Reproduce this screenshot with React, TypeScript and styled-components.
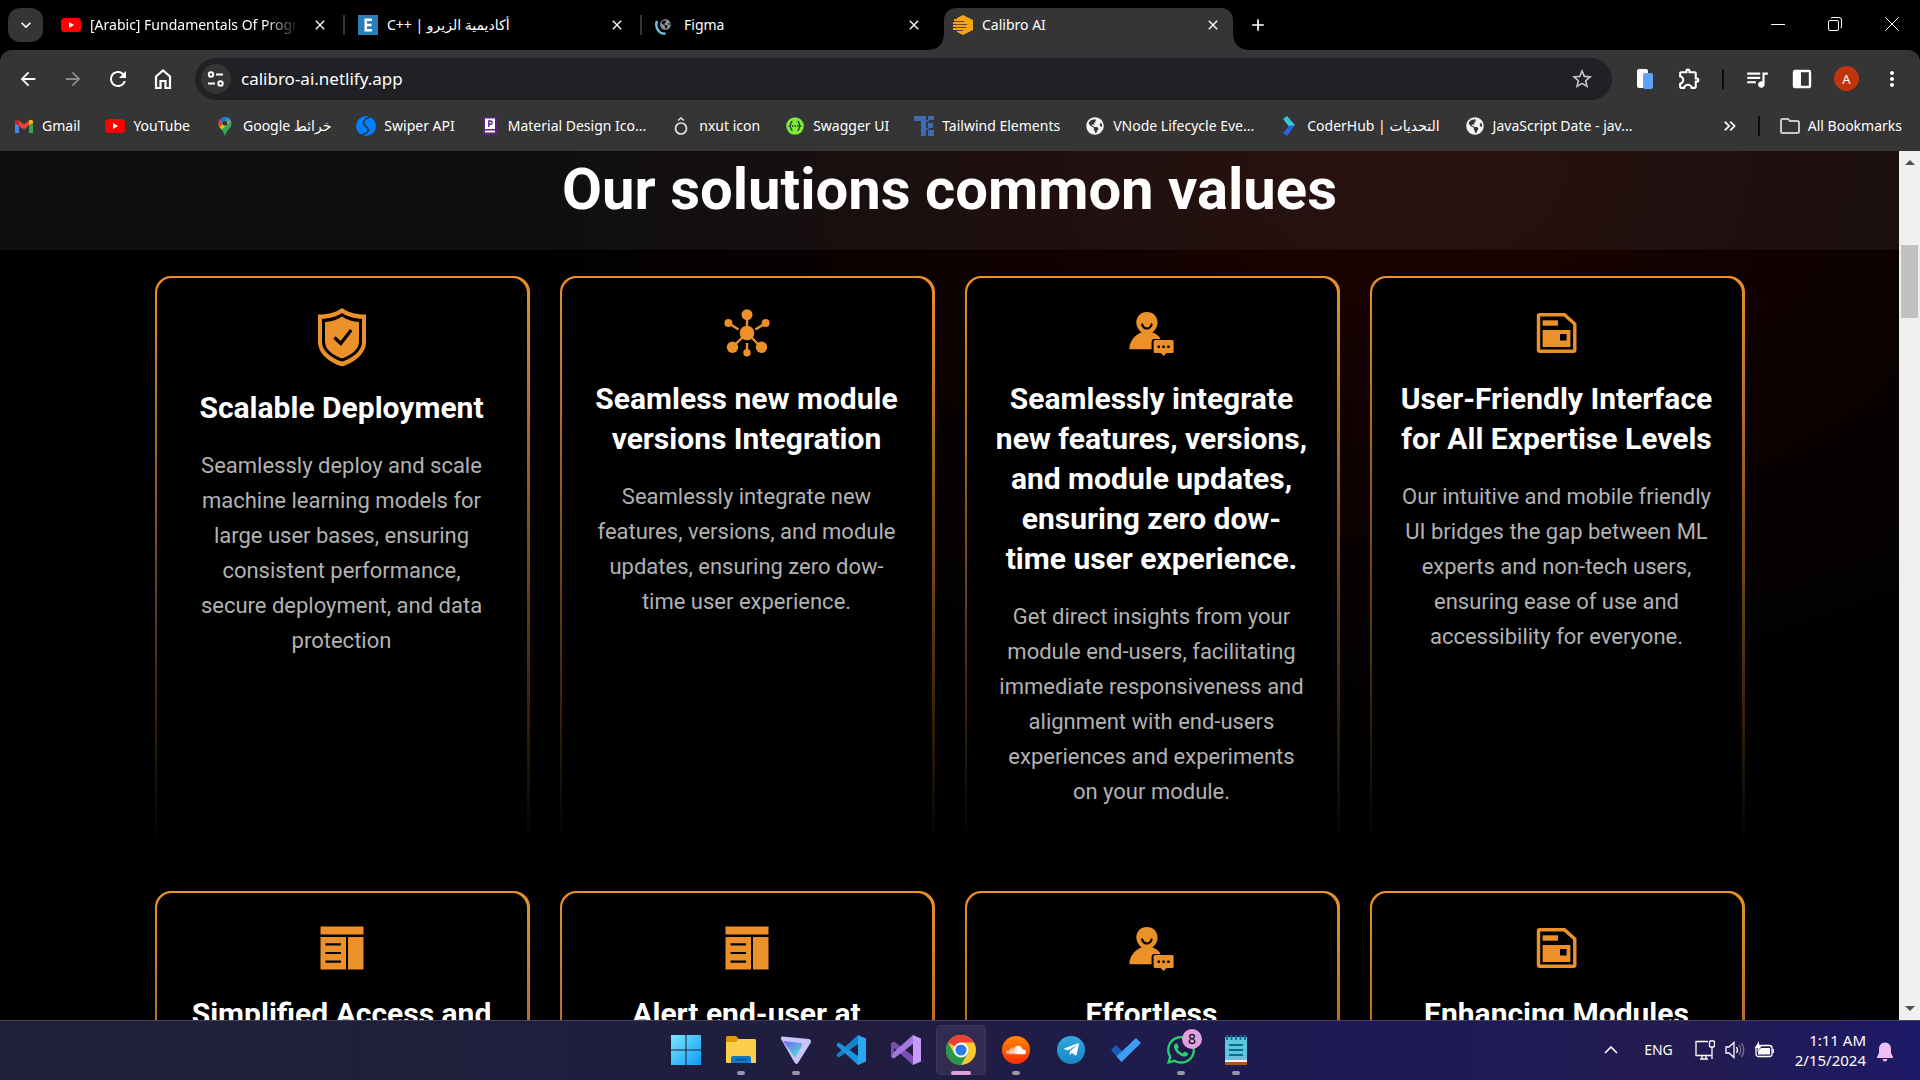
import React from "react";
import styled, { createGlobalStyle, css } from "styled-components";
import {
  MdArrowBack,
  MdArrowForward,
  MdClose,
  MdKeyboardArrowDown,
  MdMoreVert,
  MdOutlineExtension,
  MdQueueMusic,
  MdRefresh,
  MdStarBorder,
  MdAdd,
  MdKeyboardDoubleArrowRight,
} from "react-icons/md";
import { FaGlobeAmericas, FaSoundcloud, FaTelegramPlane, FaWhatsapp } from "react-icons/fa";

const UI_FONT = '"Noto Sans", "Open Sans", "DejaVu Sans", sans-serif';
const PAGE_FONT = 'Roboto, "Liberation Sans", sans-serif';
const ORANGE = "#ec9129";

const GlobalStyle = createGlobalStyle`
  *, *::before, *::after { box-sizing: border-box; }
  html, body { margin: 0; padding: 0; background: #000; }
  button, input { font: inherit; color: inherit; border: 0; background: none; padding: 0; margin: 0; outline: 0; }
  a { color: inherit; text-decoration: none; }
  h1, h2, p, ul { margin: 0; padding: 0; }
  svg { display: block; flex: none; }
`;

const Desktop = styled.div`
  display: flex;
  flex-direction: column;
  height: 100vh;
  overflow: hidden;
  background: #000;
  color: #fff;
  font-family: ${UI_FONT};
`;

/* ---------- Tab strip ---------- */

const TabStrip = styled.header`
  display: flex;
  flex: none;
  height: 50px;
  padding-left: 8px;
  background: #000;
`;

const TabSearch = styled.button`
  display: grid;
  place-items: center;
  width: 35px;
  height: 34px;
  margin: 8px 4px 0 0;
  border-radius: 12px;
  background: #353535;
`;

const Tab = styled.div<{ $active?: boolean; $divider?: boolean }>`
  position: relative;
  display: flex;
  align-items: center;
  flex: 0 1 297px;
  min-width: 0;
  gap: 9px;
  padding: 0 16px 8px 14px;
  margin-top: 8px;
  font-size: 14px;
  line-height: 20px;
  ${(p) =>
    p.$divider &&
    css`
      &::after {
        content: "";
        position: absolute;
        right: -1px;
        top: 7px;
        width: 2px;
        height: 20px;
        background: #353535;
      }
    `}
  ${(p) =>
    p.$active &&
    css`
      flex-basis: 289px;
      margin-left: 6px;
      padding: 0 12px 8px 9px;
      border-radius: 12px 12px 0 0;
      background: #353535;
      &::before,
      &::after {
        content: "";
        position: absolute;
        bottom: 0;
        width: 14px;
        height: 14px;
      }
      &::before {
        left: -14px;
        background: radial-gradient(circle at 0 0, transparent 13px, #353535 14px);
      }
      &::after {
        right: -14px;
        background: radial-gradient(circle at 100% 0, transparent 13px, #353535 14px);
      }
    `}
`;

const TabTitle = styled.button<{ $fade?: boolean }>`
  flex: 1;
  min-width: 0;
  overflow: hidden;
  white-space: nowrap;
  text-align: left;
  ${(p) =>
    p.$fade &&
    css`
      mask-image: linear-gradient(90deg, #000 82%, transparent 98%);
    `}
`;

const IconButton = styled.button<{ $size?: number }>`
  display: grid;
  place-items: center;
  flex: none;
  width: ${(p) => p.$size ?? 16}px;
  height: ${(p) => p.$size ?? 16}px;
`;

const NewTab = styled(IconButton)`
  margin: 8px 0 0 8px;
`;

const WindowControls = styled.div`
  display: flex;
  margin-left: auto;
`;

const WindowButton = styled.button`
  display: grid;
  place-items: center;
  width: 57px;
  height: 48px;
`;

/* ---------- Toolbar ---------- */

const Toolbar = styled.nav`
  display: flex;
  align-items: center;
  flex: none;
  height: 57px;
  padding: 0 6px 0 5px;
  border-radius: 12px 12px 0 0;
  background: #353535;
`;

const ToolButton = styled.button<{ $dim?: boolean }>`
  display: grid;
  place-items: center;
  flex: none;
  width: 45px;
  height: 40px;
  color: ${(p) => (p.$dim ? "#8a8a8a" : "#fff")};
`;

const Omnibox = styled.div`
  display: flex;
  align-items: center;
  flex: 1;
  gap: 10px;
  height: 42px;
  margin: 0 10px;
  padding: 0 18px 0 6px;
  border-radius: 21px;
  background: #202124;
`;

const SiteChip = styled.button`
  display: grid;
  place-items: center;
  width: 30px;
  height: 30px;
  border-radius: 50%;
  background: #353535;
`;

const Address = styled.input`
  flex: 1;
  min-width: 0;
  font-size: 17px;
  line-height: 24px;
`;

const Divider = styled.span<{ $wide?: boolean }>`
  flex: none;
  width: 2px;
  height: 20px;
  background: #0c0c0c;
  margin: ${(p) => (p.$wide ? "0 20px 0 18px" : "0 10px")};
`;

const Avatar = styled.span`
  display: grid;
  place-items: center;
  width: 25px;
  height: 25px;
  border-radius: 50%;
  background: #bf360c;
  font-size: 13px;
`;

/* ---------- Bookmarks ---------- */

const BookmarkBar = styled.nav`
  display: flex;
  align-items: center;
  flex: none;
  gap: 25px;
  height: 44px;
  padding: 0 18px 6px 14px;
  background: #353535;
  font-size: 14px;
  line-height: 20px;
  white-space: nowrap;
`;

const Bookmark = styled.a`
  display: flex;
  align-items: center;
  gap: 8px;
  svg {
    width: 20px;
  }
`;

const BookmarkEnd = styled.div`
  display: flex;
  align-items: center;
  margin-left: auto;
`;

/* ---------- Web page ---------- */

const Viewport = styled.div`
  display: flex;
  flex: 1;
  min-height: 0;
`;

const Page = styled.main`
  flex: 1;
  min-width: 0;
  overflow: hidden;
  font-family: ${PAGE_FONT};
  background: radial-gradient(ellipse 48% 560px at 74% 20px, #1c0402 0%, #130201 35%, #080101 70%, #000 100%) #000;
`;

const Band = styled.div`
  height: 99px;
  background: rgba(255, 255, 255, 0.06);
  text-align: center;
`;

const Heading = styled.h1`
  padding-top: 2px;
  font-size: 58px;
  line-height: 72px;
  font-weight: 700;
`;

const CardGrid = styled.section`
  display: grid;
  grid-template-columns: repeat(4, minmax(0, 375px));
  justify-content: center;
  gap: 45px 30px;
  padding-top: 26px;
`;

const Card = styled.article`
  display: flex;
  min-height: 570px;
  padding: 2px 3px 0 2px;
  border-radius: 16px 16px 0 0;
  background: linear-gradient(${ORANGE}, #000);
`;

const CardBody = styled.div`
  display: flex;
  flex: 1;
  flex-direction: column;
  align-items: center;
  gap: 20px;
  padding: 30px 24px 37px;
  border-radius: 15px 15px 0 0;
  background: #000;
  text-align: center;
  white-space: pre-line;
`;

const CardTitle = styled.h2`
  padding-top: 1px;
  font-size: 30px;
  line-height: 40px;
  font-weight: 700;
`;

const CardText = styled.p`
  font-size: 22px;
  line-height: 35px;
  color: #b2b2b2;
`;

const Scrollbar = styled.div`
  display: flex;
  flex-direction: column;
  width: 21px;
  background: #f0f0f0;
`;

const ScrollArrow = styled.button`
  display: grid;
  place-items: center;
  height: 23px;
`;

const ScrollTrack = styled.div`
  flex: 1;
  padding: 71px 2px 0;
`;

const ScrollThumb = styled.div`
  height: 73px;
  background: #c1c1c1;
`;

/* ---------- Taskbar ---------- */

const Taskbar = styled.footer`
  display: grid;
  grid-template-columns: 1fr auto 1fr;
  align-items: center;
  flex: none;
  height: 60px;
  padding: 0 0 2px 2px;
  border-top: 1px solid #444060;
  background: linear-gradient(90deg, #1f2138 0%, #201d40 45%, #1f1958 75%, #231c50 88%, #1e1968 100%);
`;

const Apps = styled.div`
  display: flex;
  grid-column: 2;
  gap: 5px;
`;

const AppButton = styled.button<{ $active?: boolean }>`
  position: relative;
  display: grid;
  place-items: center;
  width: 50px;
  height: 50px;
  border-radius: 5px;
  ${(p) =>
    p.$active &&
    css`
      background: #322c50;
      box-shadow: inset 0 0 0 1px #3c3658;
    `}
`;

const Running = styled.span<{ $active?: boolean }>`
  position: absolute;
  bottom: 0;
  left: 50%;
  transform: translateX(-50%);
  width: ${(p) => (p.$active ? 20 : 8)}px;
  height: 4px;
  border-radius: 2px;
  background: ${(p) => (p.$active ? "#dfa0e0" : "#9896a8")};
`;

const Badge = styled.span`
  position: absolute;
  top: 4px;
  right: 4px;
  width: 20px;
  height: 20px;
  border-radius: 50%;
  background: #dfa0e0;
  color: #000;
  font-size: 14px;
  line-height: 20px;
`;

const Tray = styled.div`
  display: flex;
  align-items: center;
  justify-content: flex-end;
  padding-right: 27px;
  font-size: 14px;
  line-height: 20px;
`;

const TrayGroup = styled.button`
  display: flex;
  align-items: center;
  gap: 10px;
  margin: 0 20px 0 22px;
`;

const Language = styled.button`
  margin-left: 25px;
`;

const Clock = styled.button`
  display: flex;
  flex-direction: column;
  align-items: flex-end;
  margin-right: 11px;
  font-size: 15px;
`;

/* ---------- Card icons ---------- */

const ShieldIcon = () => (
  <svg width="48" height="59" viewBox="0 0 48 59" fill={ORANGE}>
    <path d="M24 0C17 5 9 6.500 0 6.500V34C0 46 12 54 21 57.500Q24 59 27 57.500C36 54 48 46 48 34V6.500C39 6.500 31 5 24 0Z" />
    <path fill="#000" d="M24 5C18 9 11 10.500 4 10.800V34C4 43 13 49.500 22 53Q24 53.800 26 53C35 49.500 44 43 44 34V10.800C37 10.500 30 9 24 5Z" />
    <path d="M24 8.500C19 12 13 13.500 7 14V34C7 41 14 46.500 22.500 50Q24 50.700 25.500 50C34 46.500 41 41 41 34V14C35 13.500 29 12 24 8.500Z" />
    <path d="M16.500 29.500 22.800 35.500 33.200 22" fill="none" stroke="#000" strokeWidth="3.200" />
  </svg>
);

const NetworkIcon = () => (
  <svg width="50" height="50" viewBox="0 0 50 50" fill={ORANGE}>
    <path d="M25 7V25M8 16 16.500 21.500M42 16 33.500 21.500M25 25 10.500 39M25 25 39 39M25 35V44" stroke={ORANGE} strokeWidth="2.400" />
    <circle cx="25" cy="25" r="7.300" />
    <circle cx="25" cy="6.700" r="5.500" />
    <circle cx="6.400" cy="15" r="4" />
    <circle cx="43.600" cy="15" r="4" />
    <circle cx="10.500" cy="39.300" r="5.700" />
    <circle cx="39.500" cy="39.300" r="5.700" />
    <circle cx="25" cy="44.700" r="3.700" />
  </svg>
);

const PersonIcon = () => (
  <svg width="50" height="50" viewBox="0 0 50 50" fill={ORANGE}>
    <g transform="translate(0.600 0)">
      <path d="M19.300 4C12.800 4 8.700 8.800 8.700 14.500 8.700 18.500 11 22 14 24.500 7 27 2 33 1.700 41.300H24V34C24 32 25 31 27 31H33C31.500 28 28.500 25.500 24.700 24.500 28 22 30 18.500 30 14.500 30 8.800 25.800 4 19.300 4Z" />
      <path d="M14.500 16.500Q16 20.500 19.300 20.500T24 16.500" fill="none" stroke="#000" strokeWidth="2.200" strokeLinecap="round" />
      <path d="M27.500 32H44.500Q46 32 46 33.500V43.500Q46 45 44.500 45H39L36 48 33 45H27.500Q26 45 26 43.500V33.500Q26 32 27.500 32Z" />
      <path d="M30 37.500h2.400v2.400h-2.400zM34.800 37.500h2.400v2.400h-2.400zM39.600 37.500h2.400v2.400h-2.400z" fill="#000" />
    </g>
  </svg>
);

const SaveIcon = () => (
  <svg width="50" height="50" viewBox="0 0 50 50" fill={ORANGE}>
    <path d="M7.500 6.700H32.500L42.800 16V41.800Q42.800 43.300 41.300 43.300H8Q6.500 43.300 6.500 41.800V7.700Q6.500 6.700 7.500 6.700Z" fill="none" stroke={ORANGE} strokeWidth="3.400" />
    <path d="M10.600 12.300H26v5.400H10.600z" />
    <path fillRule="evenodd" d="M10.600 22H38.400V39H10.600zM28 26v6.600h6.600V26z" />
  </svg>
);

const LayoutIcon = () => (
  <svg width="50" height="50" viewBox="0 0 50 50" fill={ORANGE}>
    <path d="M3.500 3.500H46.500V11.500H3.500zM31 14H46.500V46.500H31zM3.500 14H29V46.500H3.500z" />
    <path d="M8.500 21.300H24M8.500 30H24M8.500 38.700H24" stroke="#000" strokeWidth="2.200" />
  </svg>
);

/* ---------- Browser icons ---------- */

const YouTubeIcon = () => (
  <svg width="20" height="14" viewBox="0 0 20 14">
    <rect width="20" height="14" rx="3.500" fill="#f00" />
    <path d="M8 4v6l5-3z" fill="#fff" />
  </svg>
);

const EIcon = () => (
  <svg width="20" height="20" viewBox="0 0 20 20">
    <rect width="20" height="20" fill="#2980b9" />
    <path d="M6.500 3.500H14V6H9V8.800H13.500V11.200H9V14H14V16.500H6.500z" fill="#fff" />
  </svg>
);

const LoadingIcon = () => (
  <svg width="20" height="20" viewBox="0 0 20 20">
    <g transform="translate(5 4)" color="#8e9399">
      <FaGlobeAmericas size={11} />
    </g>
    <path d="M2 6A8 9 0 0 0 10.500 18.500" fill="none" stroke="#6ec6de" strokeWidth="2.400" />
  </svg>
);

const CalibroIcon = () => (
  <svg width="20" height="20" viewBox="0 0 20 20">
    <path d="M10 0 20 5V15L10 20 4 17V3z" fill="#f5a40c" />
    <path d="M1 5H9M0 8H12M0 11H13M0 14H10" stroke="#f5a40c" strokeWidth="1.800" />
    <path d="M2 6.500H11M1 9.500H14M2 12.500H13M4 15.500H10" stroke="#6d4a12" strokeWidth="1" />
  </svg>
);

const GmailIcon = () => (
  <svg width="20" height="16" viewBox="0 0 20 16">
    <path d="M1 4V14Q1 15 2 15H5V7z" fill="#4285f4" />
    <path d="M19 4V14Q19 15 18 15H15V7z" fill="#34a853" />
    <path d="M15 7V2.500C16.500 1 19 1.500 19 4V5z" fill="#fbbc04" />
    <path d="M1 5V4C1 1.500 3.500 1 5 2.500L10 6.500 15 2.500V7.500L10 11.500 5 8z" fill="#ea4335" />
    <path d="M1 4C1 1.500 3.500 1 5 2.500V8L1 5z" fill="#c5221f" />
  </svg>
);

const MapsIcon = () => (
  <svg width="20" height="20" viewBox="0 0 20 20">
    <path d="M3.500 7.500A6.500 6.500 0 0 1 16.500 7.500C16.500 12 11.500 14 10 20 8.500 14 3.500 12 3.500 7.500Z" fill="#34a853" />
    <path d="M5 3.200A6.500 6.500 0 0 1 12.500 1.200L6 9z" fill="#1a73e8" />
    <path d="M12.500 1.200A6.500 6.500 0 0 1 16 5L11 10z" fill="#4285f4" />
    <path d="M5 3.200C3 6 3.200 8.500 4.500 11L8 7z" fill="#ea4335" />
    <path d="M4.500 11 6.500 13.500 16 5 12 6z" fill="#fbbc04" />
    <circle cx="10" cy="7.300" r="2.400" fill="#353535" />
  </svg>
);

const SwiperIcon = () => (
  <svg width="20" height="20" viewBox="0 0 20 20">
    <circle cx="10" cy="10" r="10" fill="#0080ff" />
    <path d="M14.500 1C7 3 6 7 10 10.500S13 17 5.500 19" fill="none" stroke="#353535" strokeWidth="1.600" />
  </svg>
);

const MaterialIcon = () => (
  <svg width="20" height="20" viewBox="0 0 20 20">
    <path d="M3 1H17V19H3z" fill="#5b2374" />
    <path d="M5 2.500H15V13H5zM5 14.500H15V16.500H5z" fill="#fff" />
    <path d="M8.800 11V5H10.500A1.600 1.600 0 0 1 10.500 8.300H9" fill="none" stroke="#5b2374" strokeWidth="1.400" />
  </svg>
);

const NxutIcon = () => (
  <svg width="20" height="20" viewBox="0 0 20 20" fill="none" stroke="#e6e6e6">
    <circle cx="10" cy="12.500" r="5.500" strokeWidth="1.700" />
    <path d="M7 4.500 10 2 13 4.500" strokeWidth="1.400" />
  </svg>
);

const SwaggerIcon = () => (
  <svg width="20" height="20" viewBox="0 0 20 20">
    <circle cx="10" cy="10" r="9.500" fill="#173647" />
    <circle cx="10" cy="10" r="8.800" fill="#85ea2d" />
    <path d="M7.500 5.500C5 5.500 7 9 4.500 10 7 11 5 14.500 7.500 14.500M12.500 5.500C15 5.500 13 9 15.500 10 13 11 15 14.500 12.500 14.500" fill="none" stroke="#173647" strokeWidth="1.300" />
    <path d="M7 10H13.500" stroke="#173647" strokeWidth="1.500" strokeDasharray="1.500 1" />
  </svg>
);

const TailwindElementsIcon = () => (
  <svg width="20" height="20" viewBox="0 0 20 20" fill="#3f6bb5">
    <path d="M0 0H12V5H0zM7 5H12V20H7zM14 0H20V4H14zM14 7H19V12H14zM14 14H20V20H14z" />
    <path d="M12 5H15M12 13H15" stroke="#3f6bb5" strokeWidth="1.500" />
  </svg>
);

const GlobeIcon = () => <FaGlobeAmericas size={18} color="#f4f4f4" />;

const CoderHubIcon = () => (
  <svg width="20" height="20" viewBox="0 0 20 20">
    <path d="M4 3 8 0 16 9 12 13z" fill="#35c8dc" />
    <path d="M16 9 8 20 4 17 10 10z" fill="#2b62e8" />
  </svg>
);

const FolderIcon = () => (
  <svg width="20" height="16" viewBox="0 0 20 16" fill="none" stroke="#c7c7c7" strokeWidth="2">
    <path d="M1 2.500Q1 1 2.500 1H8L10 3H17.500Q19 3 19 4.500V13.500Q19 15 17.500 15H2.500Q1 15 1 13.500z" />
  </svg>
);

const HomeIcon = () => (
  <svg width="20" height="22" viewBox="0 0 20 22" fill="none" stroke="#fff" strokeWidth="2.200">
    <path d="M3 8.500 10 2.500 17 8.500V20H12.500V13H7.500V20H3z" />
  </svg>
);

const TuneIcon = () => (
  <svg width="18" height="16" viewBox="0 0 18 16" fill="none" stroke="#fff" strokeWidth="2">
    <circle cx="4" cy="3.500" r="2.200" />
    <path d="M9 3.500H16M1 12.500H8" />
    <circle cx="13.500" cy="12.500" r="2.200" />
  </svg>
);

const DevicesIcon = () => (
  <svg width="18" height="20" viewBox="0 0 18 20">
    <rect x="1" y="0" width="11" height="19" rx="2" fill="#fff" />
    <rect x="7" y="4" width="10" height="16" rx="2" fill="#5ea3fb" />
  </svg>
);

const SidePanelIcon = () => (
  <svg width="20" height="20" viewBox="0 0 20 20">
    <rect x="2" y="2" width="16" height="16" rx="1" fill="none" stroke="#fff" strokeWidth="2.400" />
    <path d="M2 2H9V18H2z" fill="#fff" />
  </svg>
);

/* ---------- Taskbar icons ---------- */

const WindowsIcon = () => (
  <svg width="30" height="30" viewBox="0 0 30 30">
    <defs>
      <linearGradient id="win" x1="0" y1="0" x2="1" y2="1">
        <stop offset="0" stopColor="#7be6fc" />
        <stop offset="1" stopColor="#0f9bf6" />
      </linearGradient>
    </defs>
    <path d="M0 0H14.500V14.500H0zM15.500 0H30V14.500H15.500zM0 15.500H14.500V30H0zM15.500 15.500H30V30H15.500z" fill="url(#win)" />
  </svg>
);

const ExplorerIcon = () => (
  <svg width="30" height="28" viewBox="0 0 30 28">
    <path d="M0 1.500Q0 0 1.500 0H10L13 3V9H0z" fill="#dd9a05" />
    <path d="M0 6H10L13 3H28.500Q30 3 30 4.500V27H1.500Q0 27 0 25.500z" fill="#fccf4b" />
    <path d="M5 27V22Q5 20 7 20H23Q25 20 25 22V27z" fill="#0f7bcb" />
    <path d="M9 23.500H21" stroke="#0a4b86" strokeWidth="1.600" />
  </svg>
);

const ProtonIcon = () => (
  <svg width="30" height="30" viewBox="0 0 30 30">
    <defs>
      <linearGradient id="proton" x1="0" y1="0" x2="0.700" y2="1">
        <stop offset="0" stopColor="#7a5cff" />
        <stop offset="1" stopColor="#4fe3c8" />
      </linearGradient>
    </defs>
    <path d="M1 1.500 28 4Q31 5 29.500 8L17 28Q15 30 13.500 27.500L0 4Q0 1 1 1.500Z" fill="#c9c3fb" />
    <path d="M2 6 20 8Q22 9 21 11L14 23z" fill="url(#proton)" />
  </svg>
);

const VSCodeIcon = () => (
  <svg width="30" height="30" viewBox="0 0 30 30">
    <path d="M22 0 1 19Q0 20 1 21L3 22.500 22 9z" fill="#1583c8" />
    <path d="M22 30 1 11Q0 10 1 9L3 7.500 22 21z" fill="#1b93dd" />
    <path d="M22 0 30 3.500V26.500L22 30z" fill="#29a8f2" />
  </svg>
);

const VisualStudioIcon = () => (
  <svg width="30" height="30" viewBox="0 0 30 30">
    <path d="M0 8 3 6.500 22 21V30L3 13V19L0 22z" fill="#7a4fb5" />
    <path d="M0 22 3 23.500 22 9V0L3 17z" fill="#a576dc" />
    <path d="M22 0 30 3.500V26.500L22 30z" fill="#c79bf7" />
  </svg>
);

const ChromeIcon = () => (
  <svg width="30" height="30" viewBox="0 0 30 30">
    <circle cx="15" cy="15" r="15" fill="#fcc934" />
    <path d="M15 15 2 7.500A15 15 0 0 1 28 7.500H15z" fill="#e94235" />
    <path d="M2 7.500A15 15 0 0 0 15 30L21.500 18.700 15 15 8.500 18.800z" fill="#279847" />
    <circle cx="15" cy="15" r="7.400" fill="#fff" />
    <circle cx="15" cy="15" r="5.600" fill="#2b7be9" />
  </svg>
);

const Disc = styled.span<{ $fill: string }>`
  display: grid;
  place-items: center;
  width: 28px;
  height: 28px;
  border-radius: 50%;
  background: ${(p) => p.$fill};
  color: #fff;
`;

const TodoIcon = () => (
  <svg width="30" height="26" viewBox="0 0 30 26">
    <path d="M0 13 5 8 16 19 10.500 25z" fill="#195abd" />
    <path d="M10.500 25 5.500 19.500 25 1 30 6z" fill="#3f9cf3" />
  </svg>
);

const NotepadIcon = () => (
  <svg width="24" height="30" viewBox="0 0 24 30">
    <path d="M1 26H23V30H1z" fill="#a35a1c" />
    <path d="M1 2H23V26H1z" fill="#5cc6dc" />
    <path d="M1 25H23V27H1z" fill="#f3f3f3" />
    <path d="M3 0V5M7.500 0V5M12 0V5M16.500 0V5M21 0V5M5 10H19M5 15H19M5 20H19" stroke="#0d6a8c" strokeWidth="1.800" />
  </svg>
);

/* ---------- Data ---------- */

const bookmarks: { label: string; href: string; icon: React.ReactNode }[] = [
  { label: "Gmail", href: "#gmail", icon: <GmailIcon /> },
  { label: "YouTube", href: "#youtube", icon: <YouTubeIcon /> },
  { label: "Google خرائط", href: "#maps", icon: <MapsIcon /> },
  { label: "Swiper API", href: "#swiper", icon: <SwiperIcon /> },
  { label: "Material Design Ico...", href: "#material", icon: <MaterialIcon /> },
  { label: "nxut icon", href: "#nxut", icon: <NxutIcon /> },
  { label: "Swagger UI", href: "#swagger", icon: <SwaggerIcon /> },
  { label: "Tailwind Elements", href: "#tailwind", icon: <TailwindElementsIcon /> },
  { label: "VNode Lifecycle Eve...", href: "#vnode", icon: <GlobeIcon /> },
  { label: "CoderHub | التحديات", href: "#coderhub", icon: <CoderHubIcon /> },
  { label: "JavaScript Date - jav...", href: "#jsdate", icon: <GlobeIcon /> },
];

const cards: { icon: React.ReactNode; title: string; text?: string }[] = [
  {
    icon: <ShieldIcon />,
    title: "Scalable Deployment",
    text: "Seamlessly deploy and scale\nmachine learning models for\nlarge user bases, ensuring\nconsistent performance,\nsecure deployment, and data\nprotection",
  },
  {
    icon: <NetworkIcon />,
    title: "Seamless new module\nversions Integration",
    text: "Seamlessly integrate new\nfeatures, versions, and module\nupdates, ensuring zero dow-\ntime user experience.",
  },
  {
    icon: <PersonIcon />,
    title: "Seamlessly integrate\nnew features, versions,\nand module updates,\nensuring zero dow-\ntime user experience.",
    text: "Get direct insights from your\nmodule end-users, facilitating\nimmediate responsiveness and\nalignment with end-users\nexperiences and experiments\non your module.",
  },
  {
    icon: <SaveIcon />,
    title: "User-Friendly Interface\nfor All Expertise Levels",
    text: "Our intuitive and mobile friendly\nUI bridges the gap between ML\nexperts and non-tech users,\nensuring ease of use and\naccessibility for everyone.",
  },
  { icon: <LayoutIcon />, title: "Simplified Access and" },
  { icon: <LayoutIcon />, title: "Alert end-user at" },
  { icon: <PersonIcon />, title: "Effortless" },
  { icon: <SaveIcon />, title: "Enhancing Modules" },
];

const apps: { name: string; icon: React.ReactNode; running?: boolean; active?: boolean; badge?: string }[] = [
  { name: "Start", icon: <WindowsIcon /> },
  { name: "File Explorer", icon: <ExplorerIcon />, running: true },
  { name: "Proton VPN", icon: <ProtonIcon />, running: true },
  { name: "Visual Studio Code", icon: <VSCodeIcon /> },
  { name: "Visual Studio", icon: <VisualStudioIcon /> },
  { name: "Google Chrome", icon: <ChromeIcon />, running: true, active: true },
  {
    name: "SoundCloud",
    icon: (
      <Disc $fill="linear-gradient(#ff8a00, #ff2a00)">
        <FaSoundcloud size={20} />
      </Disc>
    ),
    running: true,
  },
  {
    name: "Telegram",
    icon: (
      <Disc $fill="linear-gradient(#2fa9e0, #1586c2)">
        <FaTelegramPlane size={17} />
      </Disc>
    ),
  },
  { name: "To Do", icon: <TodoIcon /> },
  { name: "WhatsApp", icon: <FaWhatsapp size={32} color="#25d366" />, running: true, badge: "8" },
  { name: "Notepad", icon: <NotepadIcon />, running: true },
];

const CloseTab = () => (
  <IconButton aria-label="Close tab">
    <MdClose size={16} />
  </IconButton>
);

export default function App() {
  return (
    <Desktop>
      <GlobalStyle />
      <TabStrip>
        <TabSearch aria-label="Search tabs">
          <MdKeyboardArrowDown size={20} />
        </TabSearch>
        <Tab $divider>
          <YouTubeIcon />
          <TabTitle $fade>[Arabic] Fundamentals Of Programming</TabTitle>
          <CloseTab />
        </Tab>
        <Tab $divider>
          <EIcon />
          <TabTitle dir="ltr">C++ | أكاديمية الزيرو</TabTitle>
          <CloseTab />
        </Tab>
        <Tab>
          <LoadingIcon />
          <TabTitle>Figma</TabTitle>
          <CloseTab />
        </Tab>
        <Tab $active>
          <CalibroIcon />
          <TabTitle>Calibro AI</TabTitle>
          <CloseTab />
        </Tab>
        <NewTab $size={34} aria-label="New tab">
          <MdAdd size={20} />
        </NewTab>
        <WindowControls>
          <WindowButton aria-label="Minimize">
            <svg width="14" height="14" viewBox="0 0 14 14" stroke="#fff">
              <path d="M0 7.500H14" />
            </svg>
          </WindowButton>
          <WindowButton aria-label="Restore">
            <svg width="14" height="14" viewBox="0 0 14 14" fill="none" stroke="#fff">
              <rect x="0.500" y="3.500" width="10" height="10" rx="1.500" />
              <path d="M3 1.500Q3 0.500 4 0.500H11Q13.500 0.500 13.500 3V10Q13.500 11 12.500 11" />
            </svg>
          </WindowButton>
          <WindowButton aria-label="Close">
            <svg width="14" height="14" viewBox="0 0 14 14" stroke="#fff">
              <path d="M0.500 0.500 13.500 13.500M13.500 0.500 0.500 13.500" />
            </svg>
          </WindowButton>
        </WindowControls>
      </TabStrip>

      <Toolbar>
        <ToolButton aria-label="Back">
          <MdArrowBack size={22} />
        </ToolButton>
        <ToolButton $dim aria-label="Forward">
          <MdArrowForward size={22} />
        </ToolButton>
        <ToolButton aria-label="Reload">
          <MdRefresh size={24} />
        </ToolButton>
        <ToolButton aria-label="Home">
          <HomeIcon />
        </ToolButton>
        <Omnibox>
          <SiteChip aria-label="Site information">
            <TuneIcon />
          </SiteChip>
          <Address aria-label="Address" defaultValue="calibro-ai.netlify.app" />
          <IconButton $size={24} aria-label="Bookmark this tab">
            <MdStarBorder size={24} color="#c7c7c7" />
          </IconButton>
        </Omnibox>
        <ToolButton aria-label="Devices">
          <DevicesIcon />
        </ToolButton>
        <ToolButton aria-label="Extensions">
          <MdOutlineExtension size={25} />
        </ToolButton>
        <Divider />
        <ToolButton aria-label="Media controls">
          <MdQueueMusic size={26} />
        </ToolButton>
        <ToolButton aria-label="Side panel">
          <SidePanelIcon />
        </ToolButton>
        <ToolButton aria-label="Profile">
          <Avatar>A</Avatar>
        </ToolButton>
        <ToolButton aria-label="Menu">
          <MdMoreVert size={24} />
        </ToolButton>
      </Toolbar>

      <BookmarkBar>
        {bookmarks.map((b) => (
          <Bookmark key={b.href} href={b.href} dir="ltr">
            {b.icon}
            {b.label}
          </Bookmark>
        ))}
        <BookmarkEnd>
          <IconButton $size={20} aria-label="More bookmarks">
            <MdKeyboardDoubleArrowRight size={20} />
          </IconButton>
          <Divider $wide />
          <Bookmark href="#all">
            <FolderIcon />
            All Bookmarks
          </Bookmark>
        </BookmarkEnd>
      </BookmarkBar>

      <Viewport>
        <Page>
          <Band>
            <Heading>Our solutions common values</Heading>
          </Band>
          <CardGrid>
            {cards.map((c) => (
              <Card key={c.title}>
                <CardBody>
                  {c.icon}
                  <CardTitle>{c.title}</CardTitle>
                  {c.text && <CardText>{c.text}</CardText>}
                </CardBody>
              </Card>
            ))}
          </CardGrid>
        </Page>
        <Scrollbar>
          <ScrollArrow aria-label="Scroll up">
            <svg width="10" height="5" viewBox="0 0 10 5" fill="#505050">
              <path d="M5 0 10 5H0z" />
            </svg>
          </ScrollArrow>
          <ScrollTrack>
            <ScrollThumb />
          </ScrollTrack>
          <ScrollArrow aria-label="Scroll down">
            <svg width="10" height="5" viewBox="0 0 10 5" fill="#505050">
              <path d="M0 0H10L5 5z" />
            </svg>
          </ScrollArrow>
        </Scrollbar>
      </Viewport>

      <Taskbar>
        <Apps>
          {apps.map((a) => (
            <AppButton key={a.name} $active={a.active} aria-label={a.name}>
              {a.icon}
              {a.badge && <Badge>{a.badge}</Badge>}
              {a.running && <Running $active={a.active} />}
            </AppButton>
          ))}
        </Apps>
        <Tray>
          <IconButton aria-label="Show hidden icons">
            <svg width="14" height="8" viewBox="0 0 14 8" fill="none" stroke="#fff" strokeWidth="1.600">
              <path d="M1 7 7 1 13 7" />
            </svg>
          </IconButton>
          <Language>ENG</Language>
          <TrayGroup aria-label="Network, volume and battery">
            <svg width="20" height="20" viewBox="0 0 20 20" fill="none" stroke="#fff" strokeWidth="1.300">
              <path d="M13 1.500H1V15.500H17V9M5 19H13M7 15.500V19M11 15.500V19M17 7V19" />
              <rect x="14.500" y="1" width="5" height="6" rx="1" />
            </svg>
            <svg width="20" height="18" viewBox="0 0 20 18" fill="none" stroke="#fff" strokeWidth="1.300">
              <path d="M1 6H4L9 1.500V16.500L4 12H1zM11.500 6Q13.500 9 11.500 12" />
              <path d="M14 4Q17.500 9 14 14M16.500 2Q21 9 16.500 16" opacity="0.400" />
            </svg>
            <svg width="20" height="18" viewBox="0 0 20 18">
              <rect x="1" y="4.500" width="16" height="11" rx="2.500" fill="none" stroke="#fff" strokeWidth="1.300" />
              <path d="M6 7H15V13.500H3V10z" fill="#fff" />
              <path d="M17.500 8H19V12H17.500zM4 0 0 7H3L2 11 7 4.500H4z" fill="#fff" />
            </svg>
          </TrayGroup>
          <Clock>
            <span>1:11 AM</span>
            <span>2/15/2024</span>
          </Clock>
          <IconButton aria-label="Notifications">
            <svg width="16" height="20" viewBox="0 0 16 20" fill="#f0bff2">
              <path d="M8 0.500C4 0.500 2 3.500 2 7V11L0 15V16H16V15L14 11V7C14 3.500 12 0.500 8 0.500ZM5.500 17H10.500Q10 19.500 8 19.500T5.500 17Z" />
            </svg>
          </IconButton>
        </Tray>
      </Taskbar>
    </Desktop>
  );
}
